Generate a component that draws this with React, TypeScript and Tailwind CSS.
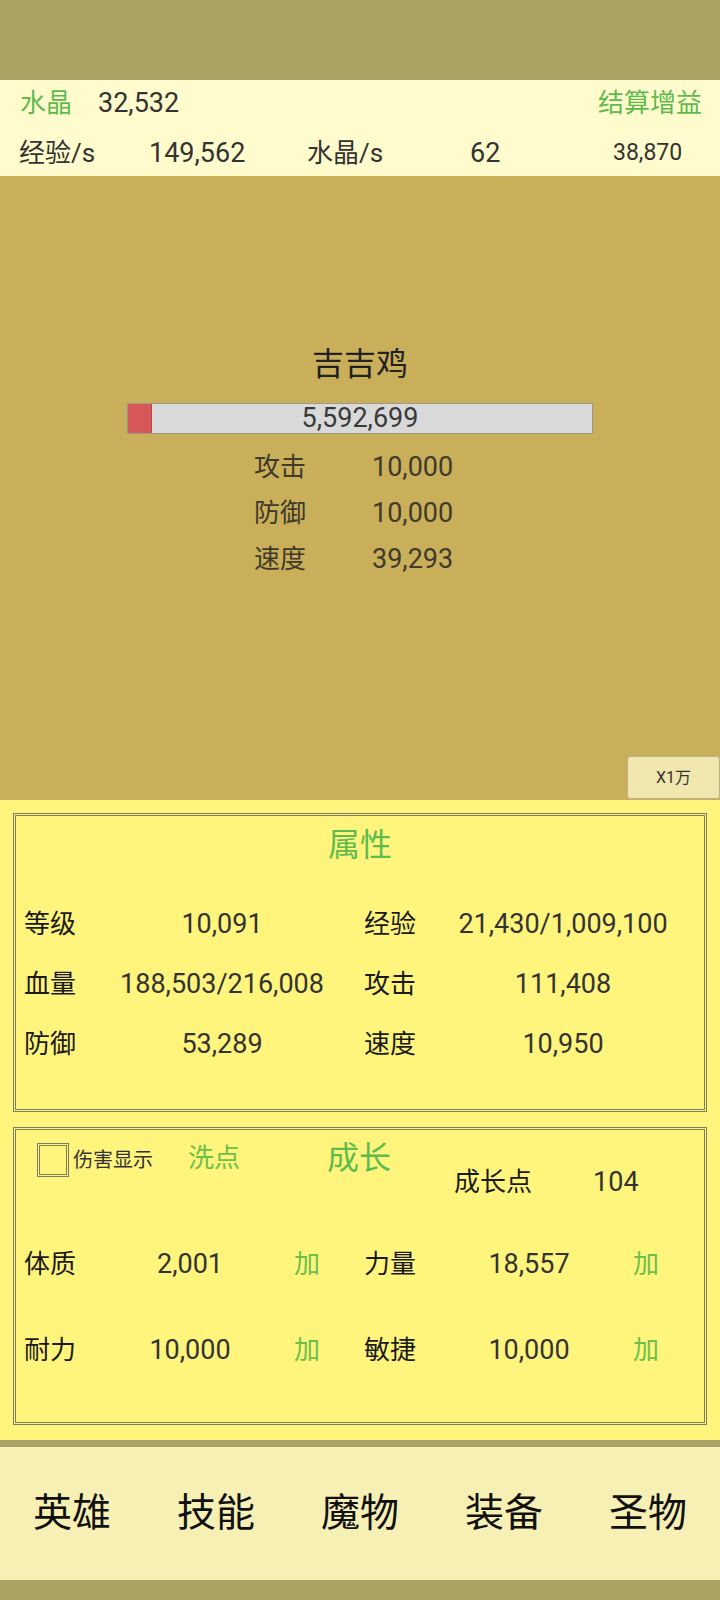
const font = { fontFamily: 'Roboto, "Noto Sans CJK SC", sans-serif' };

const heroStats = [
  ['等级', '10,091', '经验', '21,430/1,009,100'],
  ['血量', '188,503/216,008', '攻击', '111,408'],
  ['防御', '53,289', '速度', '10,950'],
];

const growth = [
  ['体质', '2,001', '力量', '18,557'],
  ['耐力', '10,000', '敏捷', '10,000'],
];

const monsterStats = [
  ['攻击', '10,000'],
  ['防御', '10,000'],
  ['速度', '39,293'],
];

const tabs = ['英雄', '技能', '魔物', '装备', '圣物'];

export default function App() {
  return (
    <div className="w-[720px] h-[1600px] flex flex-col bg-[#a9a463]" style={font}>
      <div className="h-[80px]" />

      {/* header */}
      <div className="h-[96px] bg-[#fffbcc] flex flex-col text-[26px] text-[#333]">
        <div className="h-[50px] pb-[4px] flex items-center pl-[20px] pr-[18px]">
          <span className="text-[#5dbb4f] w-[78px]">水晶</span>
          <span className="text-[27px]">32,532</span>
          <span className="ml-auto text-[#5dbb4f]">结算增益</span>
        </div>
        <div className="h-[46px] flex items-center pl-[19px]">
          <span className="w-[130px]">经验/s</span>
          <span className="w-[158px] text-[27px]">149,562</span>
          <span className="w-[163px]">水晶/s</span>
          <span className="w-[143px] text-[27px]">62</span>
          <span className="text-[23px]">38,870</span>
        </div>
      </div>

      {/* monster */}
      <div className="h-[624px] bg-[#c9af5a] flex flex-col items-center">
        <div className="mt-[168px] text-[32px] leading-[40px] text-[#222]">吉吉鸡</div>
        <div className="mt-[19px] w-[466px] h-[31px] bg-[#d9d9d9] border border-[#9a9a8a] relative flex items-center justify-center">
          <div className="absolute left-0 top-0 bottom-0 w-[24px] bg-[#d65858] border-r border-[#b04848]" />
          <span className="relative text-[27px] text-[#3a3a3a] leading-none">5,592,699</span>
        </div>
        <div className="mt-[10px] self-start ml-[254px] grid grid-cols-[118px_auto] text-[26px] leading-[46px] text-[#3f3a2a]">
          {monsterStats.map(([k, v]) => (
            <div key={k} className="contents">
              <span>{k}</span>
              <span className="text-[27px]">{v}</span>
            </div>
          ))}
        </div>
        <button className="mt-auto mb-[1px] self-end w-[93px] h-[43px] bg-[#efe7ad] border border-[#b9b08a] rounded-[3px] text-[16px] text-[#333]">
          X1万
        </button>
      </div>

      {/* panels */}
      <div className="h-[640px] bg-[#fff57d] px-[13px] pt-[13px] flex flex-col gap-[15px]">
        <div className="h-[299px] border-[3px] border-double border-[#7d7a66] flex flex-col">
          <div className="mt-[9px] text-center text-[32px] leading-[40px] text-[#5dbb4f]">属性</div>
          <div className="mt-[29px] pl-[8px] grid grid-cols-[80px_236px_100px_246px] text-[26px] leading-[60px]">
            {heroStats.map(([a, b, c, d]) => (
              <div key={a} className="contents">
                <span className="text-[#1a1a1a]">{a}</span>
                <span className="text-center text-[27px] text-[#333]">{b}</span>
                <span className="pl-[24px] text-[#1a1a1a]">{c}</span>
                <span className="text-center text-[27px] text-[#333]">{d}</span>
              </div>
            ))}
          </div>
        </div>

        <div className="h-[298px] border-[3px] border-double border-[#7d7a66] flex flex-col">
          <div className="h-[80px] flex items-start">
            <div className="mt-[13px] ml-[21px] w-[32px] h-[34px] border-[3px] border-double border-[#7d7a66]" />
            <span className="mt-[16px] ml-[4px] text-[20px] leading-[28px] text-[#333]">伤害显示</span>
            <span className="mt-[11px] ml-[35px] text-[26px] leading-[34px] text-[#6cc04a]">洗点</span>
            <span className="mt-[8px] ml-[87px] text-[32px] leading-[40px] text-[#5dbb4f]">成长</span>
            <span className="mt-[35px] ml-[63px] text-[26px] leading-[34px] text-[#1a1a1a]">成长点</span>
            <span className="mt-[35px] ml-[61px] text-[27px] leading-[34px] text-[#333]">104</span>
          </div>
          <div className="mt-[11px] pl-[8px] grid grid-cols-[80px_172px_88px_76px_178px_auto] text-[26px] leading-[86px]">
            {growth.map(([a, b, c, d]) => (
              <div key={a} className="contents">
                <span className="text-[#1a1a1a]">{a}</span>
                <span className="text-center text-[27px] text-[#333]">{b}</span>
                <span className="pl-[18px] text-[#6cc04a]">加</span>
                <span className="text-[#1a1a1a]">{c}</span>
                <span className="text-center text-[27px] text-[#333]">{d}</span>
                <span className="pl-[15px] text-[#6cc04a]">加</span>
              </div>
            ))}
          </div>
        </div>
      </div>

      {/* nav */}
      <div className="h-[7px] bg-[#aba365]" />
      <div className="h-[133px] bg-[#f7f0b5] grid grid-cols-5 items-center text-[39px] text-[#111]">
        {tabs.map((t) => (
          <span key={t} className="text-center">{t}</span>
        ))}
      </div>
      <div className="h-[20px]" />
    </div>
  );
}
